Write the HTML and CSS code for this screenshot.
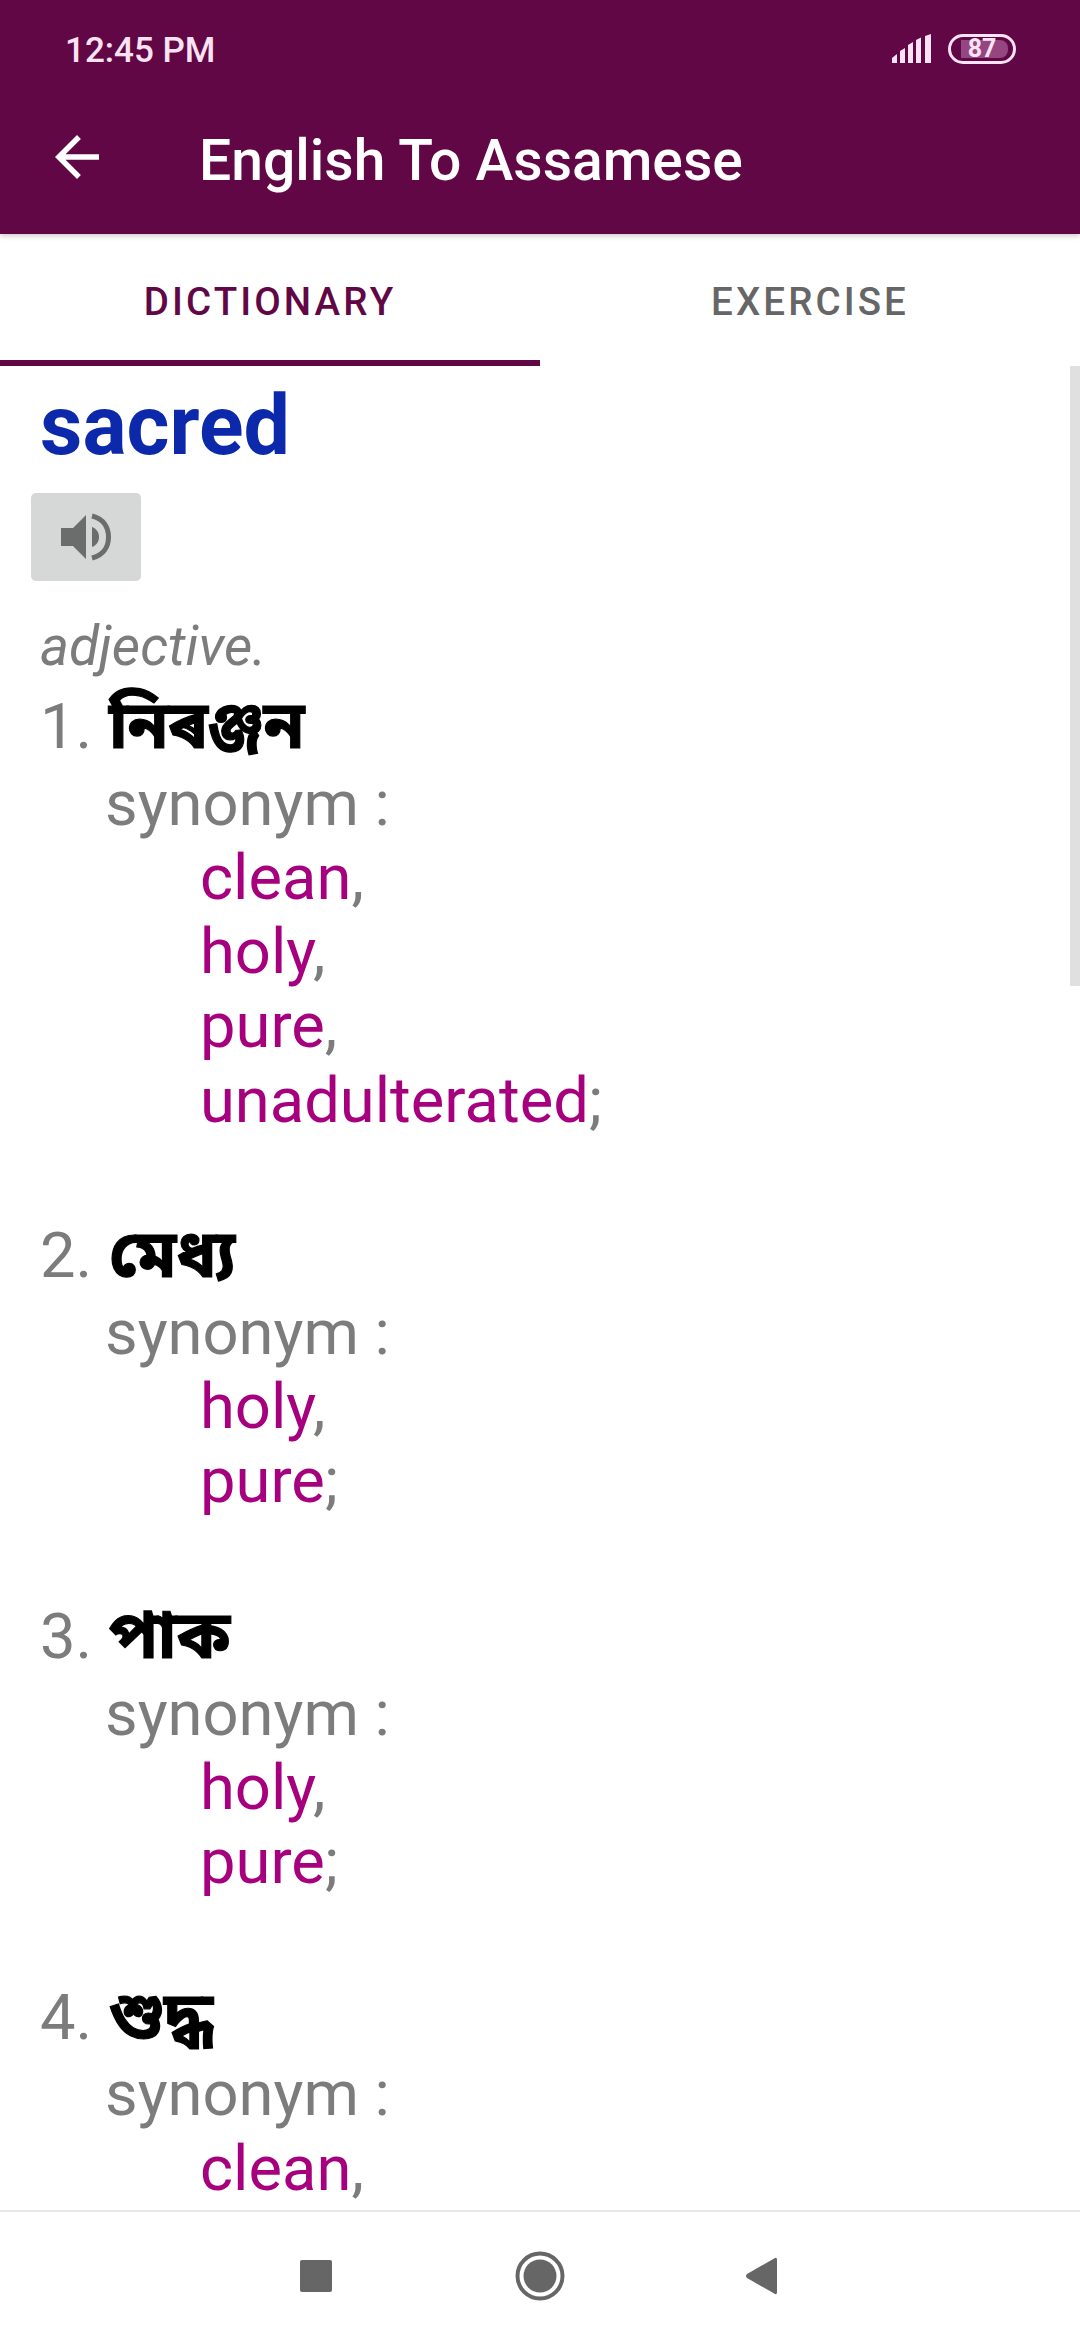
FILE: index.html
```html
<!DOCTYPE html>
<html lang="as">

<head>
    <meta charset="utf-8">
    <meta name="viewport" content="width=device-width, initial-scale=1">
    <title>English To Assamese</title>
    <link rel="stylesheet" href="styles.css">
</head>

<body>
    <div class="app">
        <header class="app-header">
            <div class="status-bar">
                <span class="status-time">12:45 PM</span>
                <div class="status-icons">
                    <svg class="signal-icon" width="40" height="30" viewBox="0 0 40 30">
                        <path d="M0 29 L0 24 L5 20 L5 29 Z M8 29 L8 17 L13 14 L13 29 Z M16 29 L16 11 L21 8 L21 29 Z M24 29 L24 6 L29 3.500 L29 29 Z M33 29 L33 2 L39 0 L39 29 Z" fill="#fbe3f3"/>
                    </svg>
                    <div class="battery">
                        <div class="battery-fill"></div>
                        <span class="battery-level">87</span>
                    </div>
                </div>
            </div>
            <div class="toolbar">
                <svg class="back-icon" width="66" height="66" viewBox="0 0 24 24">
                    <path d="M20 11H7.830l5.590-5.590L12 4l-8 8 8 8 1.410-1.410L7.830 13H20v-2z" fill="#ffffff"/>
                </svg>
                <h1 class="toolbar-title">English To Assamese</h1>
            </div>
        </header>

        <nav class="tabs">
            <div class="tab active">DICTIONARY</div>
            <div class="tab">EXERCISE</div>
        </nav>

        <main class="content">
            <div class="scrollbar"></div>
            <h2 class="word">sacred</h2>
            <button class="speak-btn">
                <svg width="50" height="48" viewBox="0 0 50 48">
                    <path d="M0 15 H12 L25 2 V46 L12 33 H0 Z" fill="#6b6c6c"/>
                    <path d="M31 14 C36 16 38 20 38 24 C38 28 36 32 31 34 Z" fill="#6b6c6c"/>
                    <path d="M31 3 C43 6 47.500 15 47.500 24 C47.500 33 43 42 31 45" fill="none" stroke="#6b6c6c" stroke-width="5"/>
                </svg>
            </button>
            <div class="part-of-speech">adjective.</div>

            <section class="entry">
                <div class="meaning"><span class="num">1.</span> <b>নিৰঞ্জন</b></div>
                <div class="synonym-label">synonym :</div>
                <div class="synonym"><span>clean</span>,</div>
                <div class="synonym"><span>holy</span>,</div>
                <div class="synonym"><span>pure</span>,</div>
                <div class="synonym"><span>unadulterated</span>;</div>
            </section>

            <section class="entry">
                <div class="meaning"><span class="num">2.</span> <b>মেধ্য</b></div>
                <div class="synonym-label">synonym :</div>
                <div class="synonym"><span>holy</span>,</div>
                <div class="synonym"><span>pure</span>;</div>
            </section>

            <section class="entry">
                <div class="meaning"><span class="num">3.</span> <b>পাক</b></div>
                <div class="synonym-label">synonym :</div>
                <div class="synonym"><span>holy</span>,</div>
                <div class="synonym"><span>pure</span>;</div>
            </section>

            <section class="entry">
                <div class="meaning"><span class="num">4.</span> <b>শুদ্ধ</b></div>
                <div class="synonym-label">synonym :</div>
                <div class="synonym"><span>clean</span>,</div>
            </section>
        </main>

        <footer class="nav-bar">
            <svg width="32" height="32" viewBox="0 0 32 32">
                <rect width="32" height="32" rx="2" fill="#666666"/>
            </svg>
            <svg class="nav-home" width="50" height="50" viewBox="0 0 50 50">
                <circle cx="25" cy="25" r="22.500" fill="none" stroke="#666666" stroke-width="4"/>
                <circle cx="25" cy="25" r="16.500" fill="#666666"/>
            </svg>
            <svg width="32" height="38" viewBox="0 0 32 38">
                <path d="M30 1 Q32 0 32 3 V35 Q32 38 30 37 L2 21 Q0 19 2 17 Z" fill="#666666"/>
            </svg>
        </footer>
    </div>
</body>

</html>
```

FILE: styles.css
```css
:root {
    --color-primary: #620745;
    --color-gray: #7c7c7c;
    --color-link: #a6007f;
    --color-word: #0c29ac;
    --color-icon: #666666;
}

* {
    box-sizing: border-box;
}

body {
    margin: 0;
    font-family: Roboto, "Noto Sans", sans-serif;
    background: #ffffff;
}

.app {
    width: 1080px;
    height: 2340px;
    display: flex;
    flex-direction: column;
    overflow: hidden;
}

.app-header {
    height: 234px;
    flex: none;
    background: var(--color-primary);
    box-shadow: 0 2px 5px rgba(0, 0, 0, 0.2);
    position: relative;
    z-index: 2;
}

.status-bar {
    height: 100px;
    padding: 0 64px 0 65px;
    display: flex;
    align-items: center;
    justify-content: space-between;
    color: #fbe3f3;
}

.status-time {
    font-size: 35px;
    font-weight: 500;
}

.status-icons {
    display: flex;
    align-items: center;
    gap: 16px;
    margin-bottom: 2px;
}

.battery {
    width: 68px;
    height: 30px;
    border: 3px solid #fbe3f3;
    border-radius: 15px;
    padding: 3px 5px 3px 10px;
    position: relative;
}

.battery-fill {
    width: 100%;
    height: 100%;
    background: #95457f;
    border-radius: 0 8px 8px 0;
}

.battery-level {
    position: absolute;
    left: 0;
    right: 0;
    top: -3px;
    text-align: center;
    font-size: 25px;
    line-height: 30px;
    font-weight: 700;
    color: #fbe3f3;
}

.toolbar {
    height: 120px;
    padding-left: 44px;
    display: flex;
    align-items: center;
    gap: 89px;
}

.back-icon {
    margin-bottom: 6px;
}

.toolbar-title {
    margin: 0;
    font-size: 57px;
    font-weight: 500;
    color: #ffffff;
}

.tabs {
    height: 132px;
    flex: none;
    display: flex;
}

.tab {
    flex: 1;
    display: flex;
    align-items: center;
    justify-content: center;
    padding-top: 2px;
    font-size: 38.500px;
    font-weight: 500;
    letter-spacing: 3.100px;
    color: #666666;
}

.tab.active {
    color: var(--color-primary);
    box-shadow: inset 0 -6px 0 var(--color-primary);
}

.content {
    flex: 1;
    min-height: 0;
    overflow: hidden;
    padding-left: 40px;
    position: relative;
    font-size: 63.250px;
    line-height: 74.250px;
    color: var(--color-gray);
}

.scrollbar {
    position: absolute;
    top: 0;
    right: 0;
    width: 10px;
    height: 620px;
    background: #e0e0e0;
}

.word {
    margin: 0;
    padding-top: 12px;
    font-size: 82.500px;
    line-height: 96px;
    font-weight: 700;
    color: var(--color-word);
}

.speak-btn {
    display: flex;
    align-items: center;
    justify-content: center;
    width: 110px;
    height: 88px;
    margin: 19px 0 0 -9px;
    padding: 0;
    border: none;
    border-radius: 5px;
    background: #d6d7d7;
}

.part-of-speech {
    margin: 28px 0 6px;
    font-size: 55px;
    line-height: 74px;
    font-style: italic;
    font-weight: 400;
}

.meaning b {
    margin-left: 1px;
    color: #000000;
    font-family: "Noto Sans Bengali", Roboto, sans-serif;
    font-size: 66px;
    font-weight: 700;
    -webkit-text-stroke: 1.200px #000000;
}

.entry {
    margin-bottom: 81.500px;
}

.meaning {
    height: 76.500px;
    line-height: 74px;
}

.synonym-label {
    padding-left: 65px;
}

.synonym {
    padding-left: 160px;
}

.synonym span {
    color: var(--color-link);
}

.nav-bar {
    height: 130px;
    flex: none;
    padding-left: 300px;
    display: flex;
    align-items: center;
    background: #ffffff;
    border-top: 2px solid #e8e8e8;
    position: relative;
    z-index: 2;
}

.nav-home {
    margin: 0 180px 0 183px;
}
```
